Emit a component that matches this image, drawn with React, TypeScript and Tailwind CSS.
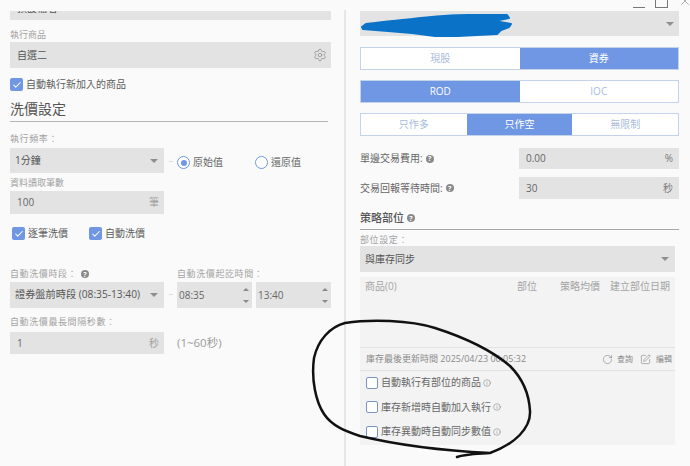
import { Check, Info, RotateCw, Settings, SquarePen, X } from 'lucide-react';
import type { ReactNode } from 'react';

const Caret = () => (
  <span className="ml-auto w-0 h-0 border-x-[4px] border-x-transparent border-t-[4px] border-t-[#8f8f8f]" />
);

const Help = () => (
  <span className="inline-flex items-center justify-center w-[8px] h-[8px] rounded-full bg-[#8a8a8a] text-[7px] leading-none text-white font-bold">?</span>
);

const FieldLabel = ({ children, className = '' }: { children: ReactNode; className?: string }) => (
  <div className={`text-[9px] leading-[12px] text-[#a3a3a3] tracking-[0.6px] ${className}`}>{children}</div>
);

const CheckedBox = ({ label }: { label: string }) => (
  <label className="flex items-center gap-[3px] text-[10px] leading-[13px] text-[#5c5c5c]">
    <span className="flex items-center justify-center w-[13px] h-[13px] rounded-[2px] bg-[#6f97e3]">
      <Check size={10} strokeWidth={2.5} className="text-white" />
    </span>
    {label}
  </label>
);

const EmptyBox = ({ label }: { label: string }) => (
  <div className="flex items-center gap-[2px] h-[13px] text-[10px] text-[#666]">
    <span className="w-[12px] h-[12px] mr-[1px] rounded-[2px] border border-[#7b94bd] bg-white" />
    {label}
    <Info size={8} strokeWidth={1.5} className="text-[#777]" />
  </div>
);

const Segments = ({ items, active }: { items: string[]; active: number }) => (
  <div className="flex h-[23px] border border-[#c5d3ea] bg-white">
    {items.map((item, i) => (
      <div
        key={item}
        className={`flex-1 flex items-center justify-center text-[10px] ${i === active ? 'bg-[#6f97e3] text-white' : 'text-[#a9bbdc]'}`}
      >
        {item}
      </div>
    ))}
  </div>
);

const Spinner = ({ value }: { value: string }) => (
  <div className="flex items-center h-[26px] bg-[#e3e3e3] pl-[2px] pr-[3px] text-[10px] text-[#666]">
    {value}
    <div className="ml-auto flex flex-col gap-[9px]">
      <span className="w-0 h-0 border-x-[3px] border-x-transparent border-b-[3px] border-b-[#8a8a8a]" />
      <span className="w-0 h-0 border-x-[3px] border-x-transparent border-t-[3px] border-t-[#8a8a8a]" />
    </div>
  </div>
);

const Dash = () => <span className="w-[4px] h-[1px] mx-[4.5px] bg-[#dddddd]" />;

const LeftPanel = () => (
  <div className="w-[345px] shrink-0 pl-[10px] pr-[14px] pt-[11px]">
    <div className="h-[9px] bg-[#e3e3e3] overflow-hidden pl-[7px]">
      <div className="text-[10px] leading-[10px] text-[#555] -mt-[8px]">預設檔名</div>
    </div>
    <FieldLabel className="mt-[9px] tracking-normal">執行商品</FieldLabel>
    <div className="flex items-center h-[26px] mt-[1px] bg-[#e3e3e3] pl-[7px] pr-[4px] text-[10px] text-[#555]">
      自選二
      <Settings size={14} strokeWidth={1} className="ml-auto text-[#777]" />
    </div>
    <div className="mt-[10px]">
      <CheckedBox label="自動執行新加入的商品" />
    </div>
    <div className="mt-[7px] pb-[1px] w-[318px] border-b border-[#b5b5b5] text-[14px] leading-[22px] text-[#555]">洗價設定</div>

    <FieldLabel className="mt-[11px]">執行頻率：</FieldLabel>
    <div className="flex mt-[3px]">
      <div className="w-[154px] shrink-0">
        <div className="flex items-center h-[25px] bg-[#e3e3e3] pl-[5px] pr-[6px] text-[10px] text-[#555]">
          1分鐘
          <Caret />
        </div>
        <FieldLabel className="mt-[4px] tracking-normal">資料讀取筆數</FieldLabel>
        <div className="flex items-center h-[23px] mt-[2px] bg-[#e3e3e3] px-[7px] pr-[5px] text-[10px] text-[#666]">
          100
          <span className="ml-auto text-[#a0a0a0]">筆</span>
        </div>
      </div>
      <div className="flex items-start h-[25px] pt-[7px] text-[10px] text-[#666]">
        <div className="flex items-center h-[13px]">
          <Dash />
        </div>
        <div className="flex items-center gap-[3px]">
          <span className="flex items-center justify-center w-[13px] h-[13px] rounded-full border border-[#6f97e3] bg-white">
            <span className="w-[6px] h-[6px] rounded-full bg-[#6f97e3]" />
          </span>
          原始值
        </div>
        <div className="flex items-center gap-[3px] ml-[32px]">
          <span className="w-[13px] h-[13px] rounded-full border border-[#6f97e3] bg-white" />
          還原值
        </div>
      </div>
    </div>
    <div className="flex gap-[21px] mt-[13px] pl-[2px]">
      <CheckedBox label="逐筆洗價" />
      <CheckedBox label="自動洗價" />
    </div>

    <div className="flex mt-[28px]">
      <div className="w-[154px] shrink-0">
        <FieldLabel className="flex items-center gap-[4px]">
          自動洗價時段：<Help />
        </FieldLabel>
        <div className="flex items-center h-[26px] mt-[2px] bg-[#e3e3e3] pl-[5px] pr-[6px] text-[10.2px] text-[#555]">
          證券盤前時段 (08:35-13:40)
          <Caret />
        </div>
      </div>
      <div className="flex items-end pb-[13px]">
        <Dash />
      </div>
      <div className="flex-1">
        <FieldLabel>自動洗價起訖時間：</FieldLabel>
        <div className="grid grid-cols-2 gap-[4px] mt-[2px] w-[154px]">
          <Spinner value="08:35" />
          <Spinner value="13:40" />
        </div>
      </div>
    </div>
    <FieldLabel className="mt-[8px]">自動洗價最長間隔秒數：</FieldLabel>
    <div className="flex items-center mt-[4px]">
      <div className="flex items-center w-[154px] h-[22px] bg-[#e3e3e3] pl-[7px] pr-[5px] text-[10px] text-[#666]">
        1
        <span className="ml-auto text-[#a0a0a0]">秒</span>
      </div>
      <span className="ml-[13px] text-[11.5px] text-[#9a9a9a]">(1~60秒)</span>
    </div>
  </div>
);

const RightPanel = () => (
  <div className="flex-1 pl-[14px] pr-[11px] pt-[1px] mt-[10px] border-l-2 border-[#e6e6e6] -ml-[1px]">
    <div className="flex items-center h-[25px] bg-[#e3e3e3] pr-[5px]">
      <Caret />
    </div>
    <div className="mt-[11px] flex flex-col gap-[10px]">
      <Segments items={['現股', '資券']} active={1} />
      <Segments items={['ROD', 'IOC']} active={0} />
      <Segments items={['只作多', '只作空', '無限制']} active={1} />
    </div>
    <div className="flex items-center mt-[12px] h-[21px] text-[10px] text-[#666]">
      <span className="flex items-center gap-[3px] w-[159px]">單邊交易費用: <Help /></span>
      <div className="flex items-center flex-1 h-full bg-[#e3e3e3] pl-[7px] pr-[6px]">
        0.00
        <span className="ml-auto text-[#777]">%</span>
      </div>
    </div>
    <div className="flex items-center mt-[8px] h-[22px] text-[10px] text-[#666]">
      <span className="flex items-center gap-[3px] w-[159px]">交易回報等待時間: <Help /></span>
      <div className="flex items-center flex-1 h-full bg-[#e3e3e3] pl-[7px] pr-[6px]">
        30
        <span className="ml-auto text-[#777]">秒</span>
      </div>
    </div>
    <div className="flex items-center gap-[3px] mt-[9px] h-[22px] border-b border-[#a8a8a8] pb-[1px] text-[11px] font-medium text-[#555]">
      策略部位 <Help />
    </div>
    <FieldLabel className="mt-[4px]">部位設定：</FieldLabel>
    <div className="flex items-center h-[26px] w-[315px] bg-[#e3e3e3] pl-[5px] pr-[6px] text-[10px] text-[#555]">
      與庫存同步
      <Caret />
    </div>
    <div className="w-[315px] mt-[5px] h-[168px] bg-[#f3f3f3] flex flex-col">
      <div className="flex items-center h-[19px] pl-[5px] pr-[5px] text-[10px] text-[#a3a3a3]">
        <span className="flex-1">商品(0)</span>
        <span className="w-[43px]">部位</span>
        <span className="w-[50px]">策略均價</span>
        <span className="w-[60px] text-right">建立部位日期</span>
      </div>
      <div className="h-[51px]" />
      <div className="flex items-center h-[24px] border-y border-[#e2e2e2] pl-[6px] pr-[3px] text-[8px] text-[#8a8a8a]">
        <span className="text-[9px]">庫存最後更新時間 2025/04/23 00:05:32</span>
        <RotateCw size={11} strokeWidth={1.2} className="ml-auto text-[#777]" />
        <span className="ml-[4px]">查詢</span>
        <SquarePen size={11} strokeWidth={1.2} className="ml-[7px] text-[#777]" />
        <span className="ml-[5px]">編輯</span>
      </div>
      <div className="flex flex-col gap-[11.5px] pl-[6px] pt-[5px]">
        <EmptyBox label="自動執行有部位的商品" />
        <EmptyBox label="庫存新增時自動加入執行" />
        <EmptyBox label="庫存異動時自動同步數值" />
      </div>
    </div>
  </div>
);

const App = () => (
  <div
    className="relative flex w-[690px] h-[466px] overflow-hidden bg-[#fafafa]"
    style={{ fontFamily: '"Open Sans", "Noto Sans CJK TC", "Liberation Sans", sans-serif' }}
  >
    <LeftPanel />
    <RightPanel />

    {/* window controls */}
    <div className="absolute right-0 top-[-6px] flex items-center gap-[10px] text-[#777]">
      <span className="w-[12px] h-[1px] bg-[#777] mt-[12px]" />
      <span className="w-[13px] h-[13px] border border-[#777]" />
      <X size={14} strokeWidth={1} className="-mr-[2px]" />
    </div>

    {/* redaction scribble and hand-drawn circle */}
    <svg className="absolute left-0 top-0 pointer-events-none" width="690" height="466" fill="none">
      <path
        d="M362 27 L366 24 C385 22 400 20 412 19 C430 17 450 15 468 15 L507 15 L509 18 L494 21 L511 24 L509 27 L501 30 L497 34 L458 36 L435 36 L412 33 L388 31 L363 29 Z"
        fill="#0a73c8"
        stroke="#0a73c8"
        strokeWidth="2"
        strokeLinejoin="round"
      />
      <path
        d="M490 453 C515 444 531 428 530 411 C529 392 522 378 510 366 C490 349 460 336 435 328 C410 320 370 319 345 323 C330 327 318 340 314 358 C311 380 316 402 324 414 C332 426 345 431 360 436 C385 442 430 450 490 453 C475 454 465 454 457 457"
        stroke="#111"
        strokeWidth="2.5"
        strokeLinecap="round"
        strokeLinejoin="round"
      />
    </svg>
  </div>
);

export default App;
